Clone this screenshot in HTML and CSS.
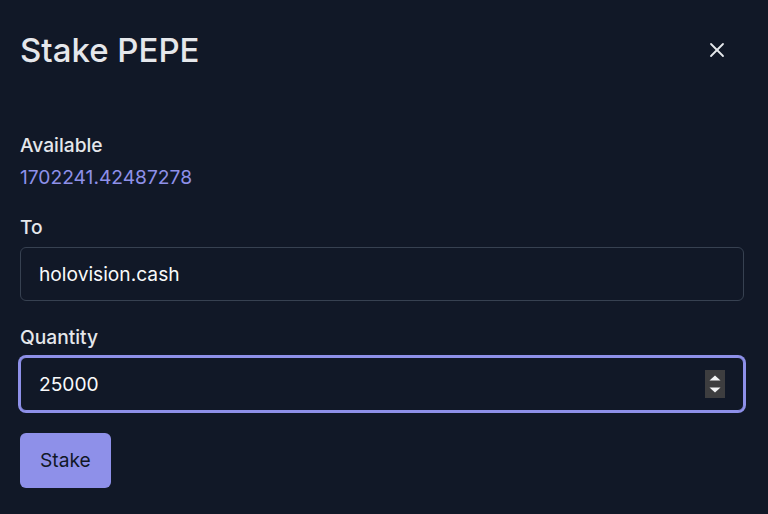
FILE: index.html
```html
<!DOCTYPE html>
<html lang="en">
<head>
<meta charset="utf-8">
<title>Stake PEPE</title>
<link rel="stylesheet" href="styles.css">
</head>
<body>
<div class="modal">
  <header class="modal-header">
    <h1 class="modal-title">Stake PEPE</h1>
    <button class="close-btn" type="button" aria-label="Close">
      <svg width="16" height="16" viewBox="0 0 16 16" fill="none" stroke="#e5e7eb" stroke-width="1.8" stroke-linecap="round">
        <line x1="2" y1="2" x2="14" y2="14"/>
        <line x1="14" y1="2" x2="2" y2="14"/>
      </svg>
    </button>
  </header>
  <form class="form">
    <div class="group">
      <div class="label label-tight">Available</div>
      <div class="balance">1702241.42487278</div>
    </div>
    <div class="group">
      <label class="label">To</label>
      <div class="field">
        <input class="field-input" type="text" value="holovision.cash">
      </div>
    </div>
    <div class="group">
      <label class="label">Quantity</label>
      <div class="field field-focus">
        <input class="field-input" type="text" value="25000">
        <span class="spinner" aria-hidden="true">
          <svg width="20" height="28" viewBox="0 0 20 28">
            <rect x="0" y="0" width="20" height="28" fill="#3d3d3f"/>
            <polygon points="10,5.5 15.5,10.5 4.5,10.5" fill="#f3f4f6"/>
            <polygon points="4.5,17.5 15.5,17.5 10,22.5" fill="#f3f4f6"/>
          </svg>
        </span>
      </div>
    </div>
    <div class="actions">
      <button class="stake-btn" type="button">Stake</button>
    </div>
  </form>
</div>
</body>
</html>
```
FILE: styles.css
```css
* {
  box-sizing: border-box;
}

html,
body {
  margin: 0;
  padding: 0;
  background: #111827;
}

body {
  font-family: Inter, "Noto Sans", "Liberation Sans", sans-serif;
  color: #e5e7eb;
  width: 768px;
  height: 514px;
  overflow: hidden;
}

.modal {
  padding: 30px 24px 0 20px;
}

.modal-header {
  display: flex;
  align-items: center;
  justify-content: space-between;
  margin-bottom: 61px;
}

.modal-title {
  margin: 0;
  font-size: 33px;
  line-height: 40px;
  font-weight: 500;
  color: #e5e7eb;
}

.close-btn {
  display: flex;
  align-items: center;
  justify-content: center;
  padding: 0;
  margin-right: 19.5px;
  background: none;
  border: none;
  cursor: pointer;
}

.form {
  display: flex;
  flex-direction: column;
  gap: 22px;
}

.group {
  display: flex;
  flex-direction: column;
}

.label {
  font-size: 19.2px;
  line-height: 28px;
  font-weight: 500;
  color: #e5e7eb;
  margin-bottom: 6px;
}

.label-tight {
  margin-bottom: 4px;
}

.balance {
  font-size: 19.2px;
  line-height: 28px;
  color: #8e90e9;
}

.field {
  display: flex;
  align-items: center;
  height: 54px;
  padding: 0 18px;
  border: 1px solid #374151;
  border-radius: 6px;
  background: #111827;
}

.field-focus {
  border-color: #8e90e9;
  box-shadow: 0 0 0 2px #8e90e9;
}

.field-input {
  flex: 1;
  min-width: 0;
  border: none;
  outline: none;
  background: transparent;
  padding: 0;
  font-family: Inter, "Noto Sans", "Liberation Sans", sans-serif;
  font-size: 19.2px;
  line-height: 26px;
  color: #f9fafb;
}

.spinner {
  display: flex;
  width: 20px;
  height: 28px;
}

.actions {
  display: flex;
}

.stake-btn {
  font-family: Inter, "Noto Sans", "Liberation Sans", sans-serif;
  font-size: 19.2px;
  line-height: 27px;
  font-weight: 400;
  color: #111827;
  background: #8e90e9;
  border: none;
  border-radius: 6px;
  padding: 14px 20px;
  cursor: pointer;
}
```
